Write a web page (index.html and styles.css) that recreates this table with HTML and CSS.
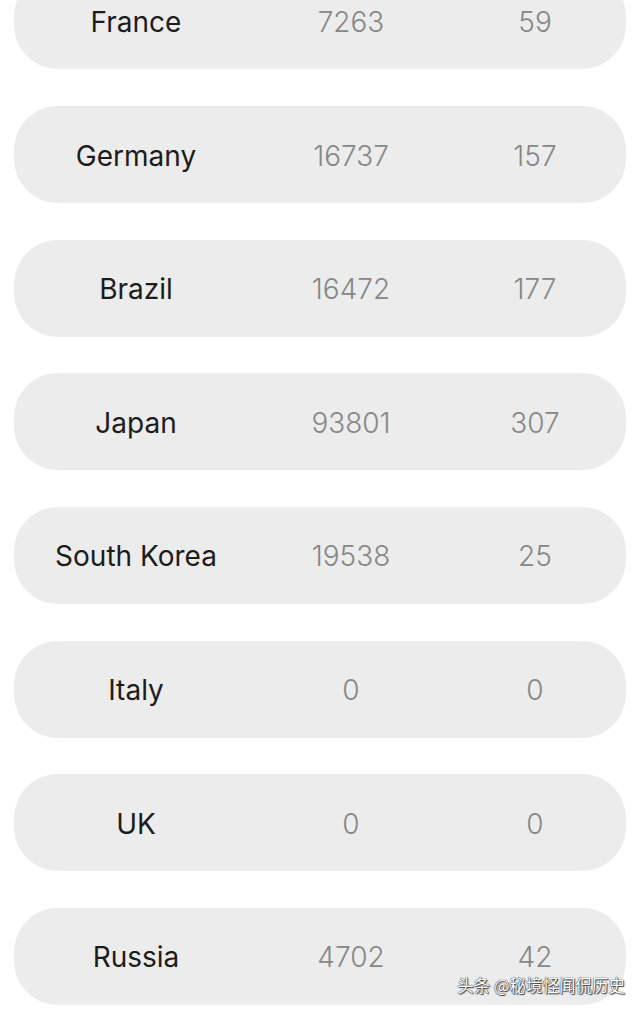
FILE: index.html
```html
<!DOCTYPE html>
<html lang="en">
<head>
<meta charset="utf-8">
<title>Country table</title>
<link rel="stylesheet" href="styles.css">
</head>
<body>
<div class="list">
  <div class="row"><span class="country">France</span><span class="num">7263</span><span class="num">59</span></div>
  <div class="row"><span class="country">Germany</span><span class="num">16737</span><span class="num">157</span></div>
  <div class="row"><span class="country">Brazil</span><span class="num">16472</span><span class="num">177</span></div>
  <div class="row"><span class="country">Japan</span><span class="num">93801</span><span class="num">307</span></div>
  <div class="row"><span class="country">South Korea</span><span class="num">19538</span><span class="num">25</span></div>
  <div class="row"><span class="country">Italy</span><span class="num">0</span><span class="num">0</span></div>
  <div class="row"><span class="country">UK</span><span class="num">0</span><span class="num">0</span></div>
  <div class="row"><span class="country">Russia</span><span class="num">4702</span><span class="num">42</span></div>
</div>
<div class="watermark">头条 @秘境怪闻侃历史</div>
</body>
</html>
```
FILE: styles.css
```css
html, body {
  margin: 0;
  padding: 0;
  background: #ffffff;
}
body {
  width: 640px;
  height: 1009px;
  overflow: hidden;
  position: relative;
  font-family: Inter, "Noto Sans", sans-serif;
}
.list {
  display: flex;
  flex-direction: column;
  gap: 36.67px;
  margin-top: -27.67px;
  padding: 0 14px;
}
.row {
  box-sizing: border-box;
  height: 97px;
  padding-top: 2px;
  border-radius: 44px;
  background: #ececec;
  display: grid;
  grid-template-columns: 244px 186px 182px;
  align-items: center;
  font-size: 28px;
}
.row span {
  text-align: center;
}
.country {
  color: #1c1c1c;
  font-weight: 400;
}
.num {
  color: #878787;
  font-weight: 300;
}
.watermark {
  position: absolute;
  right: 15px;
  bottom: 12px;
  font-family: "Noto Sans CJK SC", sans-serif;
  font-size: 16.5px;
  color: #ffffff;
  text-shadow: 0 0 1px #333, 0 0 1px #333, 1px 1px 1px #444;
}
```
